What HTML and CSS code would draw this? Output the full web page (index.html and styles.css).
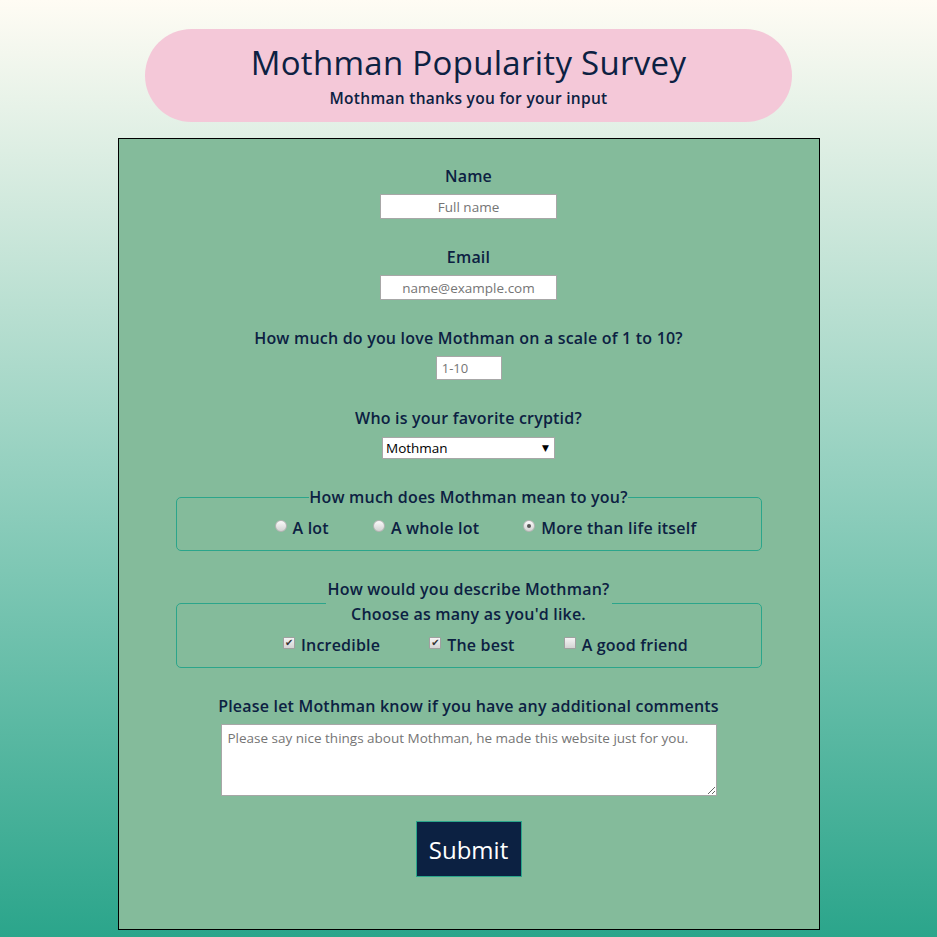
FILE: index.html
```html
<!DOCTYPE html>
<html lang="en">
<head>
<meta charset="utf-8">
<title>Mothman Popularity Survey</title>
<link rel="stylesheet" href="styles.css">
</head>
<body>
<header class="header">
  <h1 class="title">Mothman Popularity Survey</h1>
  <p class="subtitle">Mothman thanks you for your input</p>
</header>
<form class="survey">
  <div class="group">
    <label class="label" for="name">Name</label>
    <input class="field field-text" id="name" type="text" placeholder="Full name">
  </div>
  <div class="group">
    <label class="label" for="email">Email</label>
    <input class="field field-text" id="email" type="email" placeholder="name@example.com">
  </div>
  <div class="group">
    <label class="label" for="number">How much do you love Mothman on a scale of 1 to 10?</label>
    <input class="field field-number" id="number" type="number" min="1" max="10" placeholder="1-10">
  </div>
  <div class="group">
    <label class="label" for="dropdown">Who is your favorite cryptid?</label>
    <span class="select-wrap">
      <select class="field field-select" id="dropdown">
        <option>Mothman</option>
        <option>Bigfoot</option>
        <option>Nessie</option>
      </select>
    </span>
  </div>
  <fieldset class="box box-radio">
    <legend class="legend">How much does Mothman mean to you?</legend>
    <div class="choices choices-radio">
      <label class="choice"><input class="radio" type="radio" name="mean">A lot</label>
      <label class="choice"><input class="radio" type="radio" name="mean">A whole lot</label>
      <label class="choice"><input class="radio" type="radio" name="mean" checked>More than life itself</label>
    </div>
  </fieldset>
  <fieldset class="box box-check">
    <legend class="legend legend-raised">How would you describe Mothman?</legend>
    <p class="hint">Choose as many as you'd like.</p>
    <div class="choices">
      <label class="choice"><input class="check" type="checkbox" checked>Incredible</label>
      <label class="choice"><input class="check" type="checkbox" checked>The best</label>
      <label class="choice"><input class="check" type="checkbox">A good friend</label>
    </div>
  </fieldset>
  <div class="group">
    <label class="label" for="comments">Please let Mothman know if you have any additional comments</label>
    <textarea class="field field-area" id="comments" placeholder="Please say nice things about Mothman, he made this website just for you."></textarea>
  </div>
  <button class="submit" type="submit">Submit</button>
</form>
</body>
</html>
```
FILE: styles.css
```css
html {
  height: 100%;
}
body {
  margin: 0;
  min-height: 100%;
  background: linear-gradient(180deg, #fffcf4 0%, #2ba58b 100%);
  font-family: "Open Sans", "DejaVu Sans", sans-serif;
  color: #0c2142;
  display: flex;
  flex-direction: column;
  align-items: center;
  padding-top: 29px;
  box-sizing: border-box;
}
.header {
  width: 647px;
  height: 93px;
  box-sizing: border-box;
  background: #f4c8d8;
  border-radius: 47px;
  display: flex;
  flex-direction: column;
  align-items: center;
  padding-top: 13px;
}
.title {
  margin: 0;
  font-size: 33px;
  font-weight: 500;
  line-height: 42px;
  letter-spacing: 0.3px;
}
.subtitle {
  margin: 3px 0 0;
  font-size: 15.5px;
  font-weight: 600;
  line-height: 22px;
  letter-spacing: 0.3px;
}
.survey {
  margin-top: 16px;
  width: 702px;
  box-sizing: border-box;
  background: #84bb9b;
  border: 1px solid #000;
  display: flex;
  flex-direction: column;
  align-items: center;
  padding: 25px 0 52px;
}
.group {
  display: flex;
  flex-direction: column;
  align-items: center;
  gap: 6px;
  margin-bottom: 26px;
}
.label,
.legend,
.hint,
.choice {
  font-size: 16px;
  font-weight: 600;
  line-height: 24px;
  letter-spacing: 0.2px;
}
.field {
  font-family: "Open Sans", "DejaVu Sans", sans-serif;
  box-sizing: border-box;
  background: #fff;
  border: 1px solid #a7a7a7;
  margin: 0;
  color: #000;
}
.field::placeholder {
  color: #757575;
}
.field-text {
  width: 177px;
  height: 25px;
  font-size: 13.5px;
  text-align: center;
  padding: 0 4px;
}
.field-number {
  width: 66px;
  height: 24px;
  font-size: 13px;
  text-align: center;
  padding: 0 16px 0 4px;
}
.select-wrap {
  position: relative;
  display: inline-block;
}
.select-wrap::after {
  content: "▼";
  position: absolute;
  right: 6px;
  top: 5px;
  font-size: 9px;
  color: #000;
  pointer-events: none;
}
.field-select {
  appearance: none;
  -webkit-appearance: none;
  width: 173px;
  height: 22px;
  font-size: 13.5px;
  padding: 0 3px;
  border-radius: 0;
}
.box {
  width: 586px;
  box-sizing: border-box;
  margin: 0 0 26px;
  border: 1px solid #2ba58b;
  border-radius: 5px;
  padding: 7px 0 10px;
}
.legend {
  margin: 0 auto;
  padding: 0;
}
.legend-raised {
  padding: 0 2px 28px;
}
.hint {
  margin: -34px 0 0;
  text-align: center;
}
.box-check .choices {
  margin-top: 7px;
}
.choices {
  display: flex;
  justify-content: center;
  gap: 49px;
  padding-left: 34px;
}
.choices-radio {
  gap: 44px;
}
.choice {
  display: flex;
  align-items: center;
  gap: 6px;
}
.radio {
  appearance: none;
  -webkit-appearance: none;
  margin: 0 0 4px;
  width: 12px;
  height: 12px;
  border-radius: 50%;
  border: 1px solid #b4b4b4;
  background: linear-gradient(180deg, #fbfbfb, #d2d2d2);
  box-sizing: border-box;
  position: relative;
}
.radio:checked::after {
  content: "";
  position: absolute;
  left: 3px;
  top: 3px;
  width: 4px;
  height: 4px;
  border-radius: 50%;
  background: #555;
}
.check {
  appearance: none;
  -webkit-appearance: none;
  margin: 0 0 4px;
  width: 12px;
  height: 12px;
  border: 1px solid #a0a0a0;
  border-radius: 1px;
  background: linear-gradient(180deg, #f4f4f4, #d4d4d4);
  box-sizing: border-box;
  position: relative;
}
.check:checked::after {
  content: "✔";
  position: absolute;
  left: 1px;
  top: -2px;
  font-size: 10px;
  line-height: 14px;
  color: #333;
  font-family: "DejaVu Sans", sans-serif;
}
.field-area {
  width: 496px;
  height: 72px;
  margin-left: 2px;
  font-size: 13.5px;
  padding: 4px 5px;
  resize: both;
}
.submit {
  margin-top: -1px;
  width: 106px;
  height: 56px;
  background: #0c2142;
  color: #fff;
  border: 1px solid #2ba58b;
  font-family: "Open Sans", "DejaVu Sans", sans-serif;
  font-size: 24px;
  font-weight: 400;
  padding: 0;
}
```
